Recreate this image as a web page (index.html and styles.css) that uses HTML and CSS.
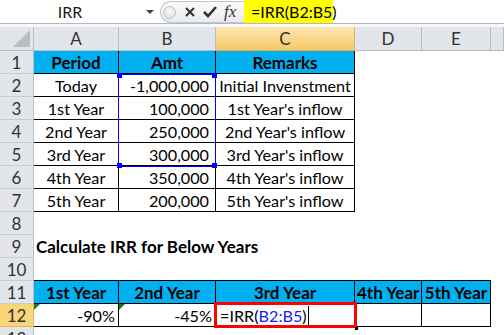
FILE: index.html
```html
<!DOCTYPE html>
<html lang="en">
<head>
    <meta charset="UTF-8">
    <title>IRR - Sheet1</title>
    <link rel="stylesheet" href="styles.css">
</head>
<body>
    <div class="formula-bar">
        <div class="name-box">
            <span class="name-text">IRR</span>
            <span class="drop"></span>
        </div>
        <div class="fx-buttons">
            <span class="grip"></span>
            <svg class="btn cancel" width="14" height="14" viewBox="0 0 14 14">
                <path d="M3 3 L11 11 M11 3 L3 11" stroke="#333" stroke-width="2" fill="none"/>
            </svg>
            <svg class="btn enter" width="16" height="14" viewBox="0 0 16 14">
                <path d="M2 7 L6 11 L14 2" stroke="#333" stroke-width="2.6" fill="none"/>
            </svg>
            <span class="fx">fx</span>
        </div>
        <div class="formula">=IRR(B2:B5)</div>
        <div class="formula-rest"></div>
    </div>
    <div class="bar-gap"></div>

    <div class="sheet">
        <!-- column headers -->
        <div class="corner"><span class="corner-tri"></span></div>
        <div class="ch">A</div>
        <div class="ch">B</div>
        <div class="ch sel">C</div>
        <div class="ch">D</div>
        <div class="ch">E</div>
        <div class="ch"></div>

        <!-- 1 -->
        <div class="rh">1</div>
        <div class="cell b hd">Period</div>
        <div class="cell b hd">Amt</div>
        <div class="cell b hd">Remarks</div>
        <div class="cell"></div><div class="cell"></div><div class="cell"></div>

        <!-- 2 -->
        <div class="rh">2</div>
        <div class="cell b ctr">Today</div>
        <div class="cell b num">-1,000,000</div>
        <div class="cell b ctr">Initial Invenstment</div>
        <div class="cell"></div><div class="cell"></div><div class="cell"></div>

        <!-- 3 -->
        <div class="rh">3</div>
        <div class="cell b ctr">1st Year</div>
        <div class="cell b num">100,000</div>
        <div class="cell b ctr">1st Year's inflow</div>
        <div class="cell"></div><div class="cell"></div><div class="cell"></div>

        <!-- 4 -->
        <div class="rh">4</div>
        <div class="cell b ctr">2nd Year</div>
        <div class="cell b num">250,000</div>
        <div class="cell b ctr">2nd Year's inflow</div>
        <div class="cell"></div><div class="cell"></div><div class="cell"></div>

        <!-- 5 -->
        <div class="rh">5</div>
        <div class="cell b ctr">3rd Year</div>
        <div class="cell b num">300,000</div>
        <div class="cell b ctr">3rd Year's inflow</div>
        <div class="cell"></div><div class="cell"></div><div class="cell"></div>

        <!-- 6 -->
        <div class="rh">6</div>
        <div class="cell b ctr">4th Year</div>
        <div class="cell b num">350,000</div>
        <div class="cell b ctr">4th Year's inflow</div>
        <div class="cell"></div><div class="cell"></div><div class="cell"></div>

        <!-- 7 -->
        <div class="rh">7</div>
        <div class="cell b ctr">5th Year</div>
        <div class="cell b num">200,000</div>
        <div class="cell b ctr">5th Year's inflow</div>
        <div class="cell"></div><div class="cell"></div><div class="cell"></div>

        <!-- 8 -->
        <div class="rh">8</div>
        <div class="cell"></div><div class="cell"></div><div class="cell"></div>
        <div class="cell"></div><div class="cell"></div><div class="cell"></div>

        <!-- 9 -->
        <div class="rh">9</div>
        <div class="cell title">Calculate IRR for Below Years</div>
        <div class="cell"></div><div class="cell"></div>
        <div class="cell"></div><div class="cell"></div><div class="cell"></div>

        <!-- 10 -->
        <div class="rh">10</div>
        <div class="cell bb"></div><div class="cell bb"></div><div class="cell bb"></div>
        <div class="cell bb"></div><div class="cell bb"></div><div class="cell"></div>

        <!-- 11 -->
        <div class="rh">11</div>
        <div class="cell b hd">1st Year</div>
        <div class="cell b hd">2nd Year</div>
        <div class="cell b hd">3rd Year</div>
        <div class="cell b hd">4th Year</div>
        <div class="cell b hd">5th Year</div>
        <div class="cell"></div>

        <!-- 12 -->
        <div class="rh sel">12</div>
        <div class="cell b pct"><span class="flag"></span>-90%</div>
        <div class="cell b pct"><span class="flag"></span>-45%</div>
        <div class="cell b edit">=IRR(<span class="ref">B2:B5</span>)<span class="caret"></span></div>
        <div class="cell b"></div>
        <div class="cell b"></div>
        <div class="cell"></div>

        <!-- 13 -->
        <div class="rh">13</div>
        <div class="cell"></div><div class="cell"></div><div class="cell"></div>
        <div class="cell"></div><div class="cell"></div><div class="cell"></div>

        <!-- range highlight for B2:B5 and active cell -->
        <div class="range">
            <span class="knob tl"></span><span class="knob tr"></span>
            <span class="knob bl"></span><span class="knob br"></span>
        </div>
        <div class="active"></div>
    </div>
</body>
</html>
```

FILE: styles.css
```css
* {
    box-sizing: border-box;
}

body {
    margin: 0;
    background: #fff;
    font-family: Lato, 'Liberation Sans', sans-serif;
    font-size: 16.2px;
    color: #000;
    overflow: hidden;
}

/* ---- formula bar ---- */
.formula-bar {
    display: flex;
    height: 24px;
    border-bottom: 1px solid #b4b9c0;
}

.name-box {
    width: 160px;
    display: flex;
    align-items: center;
}

.name-text {
    width: 140px;
    text-align: center;
    font-size: 16px;
    color: #1a1a1a;
}

.drop {
    margin-left: 6px;
    width: 0;
    height: 0;
    border-left: 4px solid transparent;
    border-right: 4px solid transparent;
    border-top: 4px solid #444;
}

.fx-buttons {
    width: 84px;
    display: flex;
    align-items: center;
    background: linear-gradient(#fbfbfb, #e9ebee);
    border: 1px solid #c2c6cc;
    border-right: none;
    border-radius: 12px 0 0 12px;
    margin-top: 1px;
    height: 22px;
}

.grip {
    width: 13px;
    height: 13px;
    margin-left: 2px;
    border-radius: 50%;
    background: radial-gradient(circle at 50% 40%, #fafafa, #d4d6d9);
    border: 1px solid #c0c3c7;
}

.btn {
    display: block;
}

.cancel {
    margin-left: 7px;
}

.enter {
    margin-left: 5px;
}

.fx {
    font-family: 'Liberation Serif', serif;
    font-style: italic;
    font-size: 17px;
    color: #333;
    margin-left: 6px;
}

.formula {
    width: 89px;
    background: #ffff00;
    padding-left: 7px;
    font-size: 16px;
    line-height: 23px;
}

.formula-rest {
    flex: 1;
}

.bar-gap {
    height: 3px;
    background: #f6f7f8;
}

/* ---- grid ---- */
.sheet {
    position: relative;
    display: grid;
    grid-template-columns: 34px 85px 97px 139px 67px 69px 1fr;
    grid-template-rows: 24px repeat(13, 23px);
}

.corner,
.ch,
.rh {
    background: #e2e5ea;
    color: #333;
    border-right: 1px solid #b9bec5;
    border-bottom: 1px solid #b9bec5;
    display: flex;
    align-items: center;
    justify-content: center;
    font-size: 17px;
}

.rh {
    border-bottom-color: #c9cdd2;
}

.corner {
    position: relative;
}

.corner-tri {
    position: absolute;
    right: 3px;
    bottom: 3px;
    width: 17px;
    height: 17px;
    background: #b9bdc2;
    clip-path: polygon(100% 0, 100% 100%, 0 100%);
}

.ch.sel {
    background: linear-gradient(#fde6b2, #f6c863);
    border-bottom-color: #e2a743;
    border-right-color: #e2b35e;
}

.rh.sel {
    background: #f9d779;
    border-bottom-color: #e3b55a;
    border-right-color: #e3b55a;
}

.cell {
    position: relative;
    white-space: nowrap;
    line-height: 23px;
    padding: 0 2px;
}

.b {
    border-right: 1px solid #000;
    border-bottom: 1px solid #000;
}

.bb {
    border-bottom: 1px solid #000;
}

.hd {
    background: #00b0f0;
    font-weight: bold;
    font-size: 17px;
    text-align: center;
}

.ctr {
    text-align: center;
}

.num {
    text-align: right;
    padding-right: 6px;
}

.pct {
    text-align: right;
    padding-right: 3px;
}

.title {
    font-weight: bold;
    font-size: 17px;
    overflow: visible;
}

.flag {
    position: absolute;
    left: 0;
    top: 0;
    width: 6px;
    height: 6px;
    background: #1f7a1f;
    clip-path: polygon(0 0, 100% 0, 0 100%);
}

.edit {
    padding-left: 4px;
}

.ref {
    color: #1a1aff;
}

.caret {
    display: inline-block;
    vertical-align: top;
    margin-top: 2px;
    margin-left: 1px;
    width: 1px;
    height: 19px;
    background: #000;
}

/* ---- overlays ---- */
.range {
    position: absolute;
    left: 118px;
    top: 47px;
    width: 98px;
    height: 93px;
    border: 1px solid #0000ff;
}

.knob {
    position: absolute;
    width: 5px;
    height: 5px;
    background: #0000ff;
}

.tl { left: -2px; top: -2px; }
.tr { right: -2px; top: -2px; }
.bl { left: -2px; bottom: -2px; }
.br { right: -2px; bottom: -2px; }

.active {
    position: absolute;
    left: 214px;
    top: 275px;
    width: 143px;
    height: 26px;
    border: 3px solid #ff0000;
}

.active::after {
    content: '';
    position: absolute;
    right: -4px;
    bottom: -5px;
    width: 3px;
    height: 3px;
    background: #000;
}
```
